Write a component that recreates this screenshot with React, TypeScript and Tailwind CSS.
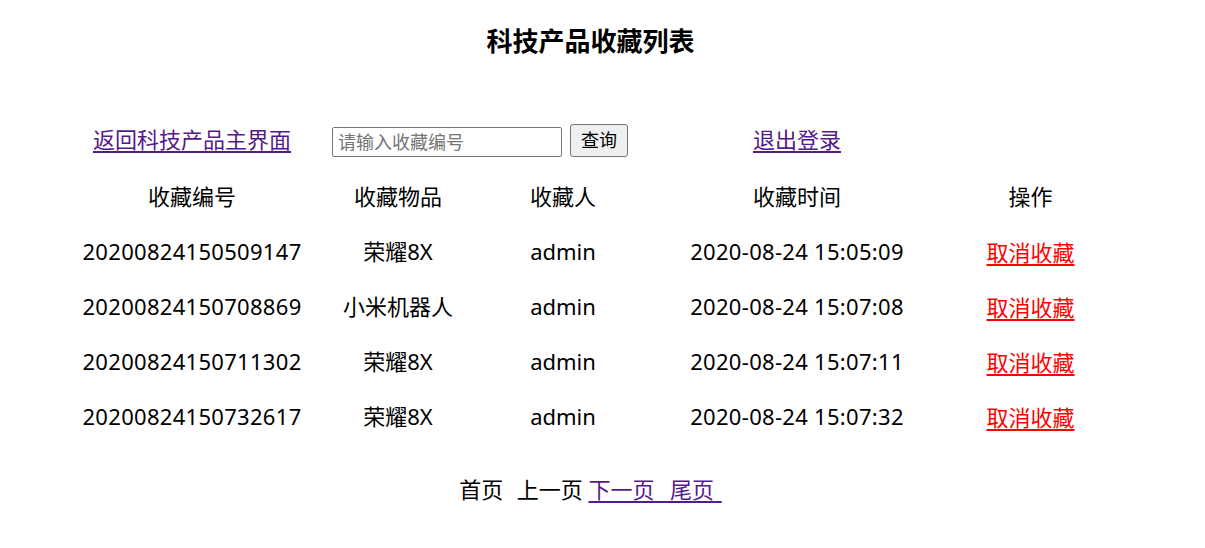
import React from "react";

const rows = [
  ["20200824150509147", "荣耀8X", "admin", "2020-08-24 15:05:09"],
  ["20200824150708869", "小米机器人", "admin", "2020-08-24 15:07:08"],
  ["20200824150711302", "荣耀8X", "admin", "2020-08-24 15:07:11"],
  ["20200824150732617", "荣耀8X", "admin", "2020-08-24 15:07:32"],
];

export default function App() {
  const font = { fontFamily: '"Noto Sans", "Noto Sans CJK SC", sans-serif' };
  return (
    <div className="w-[1181px] bg-white text-black h-[548px]" style={font}>
      <h3 className="pt-[26px] text-center text-[26px] leading-[30px] font-bold">科技产品收藏列表</h3>
      <div className="mt-[57px] mx-auto w-[1043px] grid grid-cols-[246px_166px_164px_304px_163px] text-[22px]">
        <div className="h-[56px] pb-[4px] flex items-center justify-center">
          <a href="#" className="text-[#551a8b] underline underline-offset-[3px] leading-none">返回科技产品主界面</a>
        </div>
        <div className="col-span-2 h-[56px] pb-[2px] flex items-center justify-center">
          <div className="flex items-end gap-[8px]">
            <input
              type="text"
              placeholder="请输入收藏编号"
              className="w-[230px] h-[30px] border border-[#767676] rounded-[2px] px-[5px] text-[18px] placeholder:text-[#757575] outline-none"
            />
            <button className="w-[58px] h-[33px] border border-[#767676] rounded-[3px] bg-[#efefef] text-[18px] leading-none">查询</button>
          </div>
        </div>
        <div className="h-[56px] pb-[4px] flex items-center justify-center">
          <a href="#" className="text-[#551a8b] underline underline-offset-[3px] leading-none">退出登录</a>
        </div>
        <div className="h-[56px]" />
        {["收藏编号", "收藏物品", "收藏人", "收藏时间", "操作"].map((h) => (
          <div key={h} className="h-[55px] flex items-center justify-center">{h}</div>
        ))}
        {rows.map((r) => (
          <React.Fragment key={r[0]}>
            {r.map((c, i) => (
              <div
                key={i}
                className={
                  i === 0 || i === 3
                    ? "h-[55px] flex items-center justify-center tracking-[0.3px]"
                    : "h-[55px] flex items-center justify-center"
                }
              >
                {c}
              </div>
            ))}
            <div className="h-[55px] flex items-center justify-center">
              <a href="#" className="text-[#ff0000] underline underline-offset-[3px] leading-none">取消收藏</a>
            </div>
          </React.Fragment>
        ))}
      </div>
      <div className="mt-[30px] text-center text-[22px] leading-[30px] whitespace-pre">
        <span>首页</span>
        <span className="[word-spacing:1px]">{"  "}</span>
        <span>上一页</span>
        <span>{" "}</span>
        <a href="#" className="text-[#551a8b] underline underline-offset-[3px] [word-spacing:2px]">{"下一页  尾页 "}</a>
      </div>
    </div>
  );
}
